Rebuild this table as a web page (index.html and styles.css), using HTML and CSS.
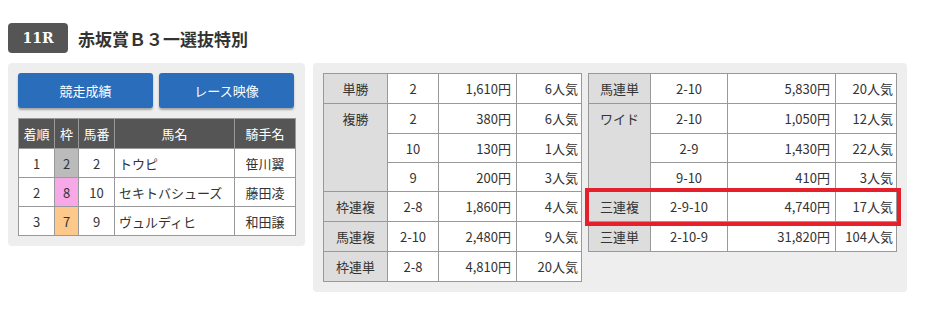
FILE: index.html
```html
<!DOCTYPE html>
<html lang="ja">
<head>
<meta charset="utf-8">
<link rel="stylesheet" href="styles.css">
</head>
<body>
<div class="page">
  <div class="race-head">
    <span class="race-no">11R</span>
    <h1 class="race-name">赤坂賞Ｂ３一選抜特別</h1>
  </div>
  <div class="panels">
    <div class="panel panel-left">
      <div class="buttons">
        <a class="btn">競走成績</a>
        <a class="btn">レース映像</a>
      </div>
      <table class="result">
        <colgroup><col class="c1"><col class="c2"><col class="c3"><col class="c4"><col class="c5"></colgroup>
        <thead>
          <tr><th>着順</th><th>枠</th><th>馬番</th><th>馬名</th><th>騎手名</th></tr>
        </thead>
        <tbody>
          <tr><td>1</td><td class="waku2">2</td><td>2</td><td class="name">トウピ</td><td>笹川翼</td></tr>
          <tr><td>2</td><td class="waku8">8</td><td>10</td><td class="name">セキトバシューズ</td><td>藤田凌</td></tr>
          <tr><td>3</td><td class="waku7">7</td><td>9</td><td class="name">ヴュルディヒ</td><td>和田譲</td></tr>
        </tbody>
      </table>
    </div>
    <div class="panel panel-right">
      <table class="pay pay-a">
        <colgroup><col class="a1"><col class="a2"><col class="a3"><col class="a4"></colgroup>
        <tr><th>単勝</th><td class="k">2</td><td class="y">1,610円</td><td class="n">6人気</td></tr>
        <tr><th rowspan="3" class="top">複勝</th><td class="k">2</td><td class="y">380円</td><td class="n">6人気</td></tr>
        <tr class="sub"><td class="k">10</td><td class="y">130円</td><td class="n">1人気</td></tr>
        <tr class="sub"><td class="k">9</td><td class="y">200円</td><td class="n">3人気</td></tr>
        <tr><th>枠連複</th><td class="k">2-8</td><td class="y">1,860円</td><td class="n">4人気</td></tr>
        <tr><th>馬連複</th><td class="k">2-10</td><td class="y">2,480円</td><td class="n">9人気</td></tr>
        <tr><th>枠連単</th><td class="k">2-8</td><td class="y">4,810円</td><td class="n">20人気</td></tr>
      </table>
      <table class="pay pay-b">
        <colgroup><col class="b1"><col class="b2"><col class="b3"><col class="b4"></colgroup>
        <tr><th>馬連単</th><td class="k">2-10</td><td class="y">5,830円</td><td class="n">20人気</td></tr>
        <tr><th rowspan="3" class="top">ワイド</th><td class="k">2-10</td><td class="y">1,050円</td><td class="n">12人気</td></tr>
        <tr class="sub"><td class="k">2-9</td><td class="y">1,430円</td><td class="n">22人気</td></tr>
        <tr class="sub"><td class="k">9-10</td><td class="y">410円</td><td class="n">3人気</td></tr>
        <tr class="hit"><th>三連複</th><td class="k">2-9-10</td><td class="y">4,740円</td><td class="n">17人気</td></tr>
        <tr><th>三連単</th><td class="k">2-10-9</td><td class="y">31,820円</td><td class="n">104人気</td></tr>
      </table>
    </div>
  </div>
</div>
</body>
</html>
```
FILE: styles.css
```css
* { box-sizing: border-box; }
html, body { margin: 0; padding: 0; background: #fff; }
body {
  font-family: "Noto Sans CJK JP", "Noto Sans", sans-serif;
  font-size: 13px;
  color: #333;
}
.page { padding: 23px 8px 0 8px; width: 929px; }
.race-head { display: flex; align-items: center; height: 30px; }
.race-no {
  display: inline-flex; align-items: center; justify-content: center;
  width: 60px; height: 30px;
  background: #555; color: #fff; border-radius: 4px;
  font-family: "DejaVu Serif", "Liberation Serif", serif;
  font-weight: bold; font-size: 14px;
}
.race-name {
  margin: 0 0 0 10px; font-size: 17px; font-weight: bold; color: #333;
}
.panels { display: flex; align-items: flex-start; gap: 8px; margin-top: 10px; }
.panel { background: #eee; border-radius: 4px; padding: 10px; }
.panel-left { width: 297px; }
.panel-right { width: 594px; display: flex; align-items: flex-start; gap: 6px; padding-bottom: 10px; }

.buttons { display: flex; gap: 6px; }
.btn {
  display: flex; align-items: center; justify-content: center;
  width: 135px; height: 35px;
  background: #2a6ebb; color: #fff; border-radius: 3px;
  box-shadow: 0 2px 2px rgba(0,0,0,0.3);
  font-size: 13px;
}

table { border-collapse: collapse; table-layout: fixed; background: #fff; }
.result { margin-top: 10px; width: 277px; }
.result col.c1 { width: 36px; }
.result col.c2 { width: 24px; }
.result col.c3 { width: 36px; }
.result col.c4 { width: 120px; }
.result col.c5 { width: 61px; }
.result th, .result td {
  border: 1px solid #999; text-align: center; padding: 0; height: 29px;
}
.result th { background: #555; color: #fff; font-weight: normal; height: 30px; }
.result tbody tr + tr td { border-top: 1px dotted #999; }
.result td.name { text-align: left; padding-left: 4px; }
.waku2 { background: #bbb; }
.waku8 { background: #f7a8e6; }
.waku7 { background: #fdc98b; }

.pay th, .pay td { border: 1px solid #999; padding: 0; height: 30px; }
.pay tr.sub td { border-top: 1px dotted #999; height: 29px; }
.pay th { background: #ddd; font-weight: normal; text-align: center; }
.pay th.top { vertical-align: top; padding-top: 5px; }
.pay td.k { text-align: center; }
.pay td.y { text-align: right; padding-right: 5px; }
.pay td.n { text-align: right; padding-right: 3px; }
.pay-a { width: 258px; }
.pay-a col.a1 { width: 64px; }
.pay-a col.a2 { width: 51px; }
.pay-a col.a3 { width: 78px; }
.pay-a col.a4 { width: 65px; }
.pay-b { width: 308px; }
.pay-b col.b1 { width: 62px; }
.pay-b col.b2 { width: 77px; }
.pay-b col.b3 { width: 108px; }
.pay-b col.b4 { width: 61px; }
.pay tr.hit { outline: 4px solid #e5202a; outline-offset: 0; }
```
